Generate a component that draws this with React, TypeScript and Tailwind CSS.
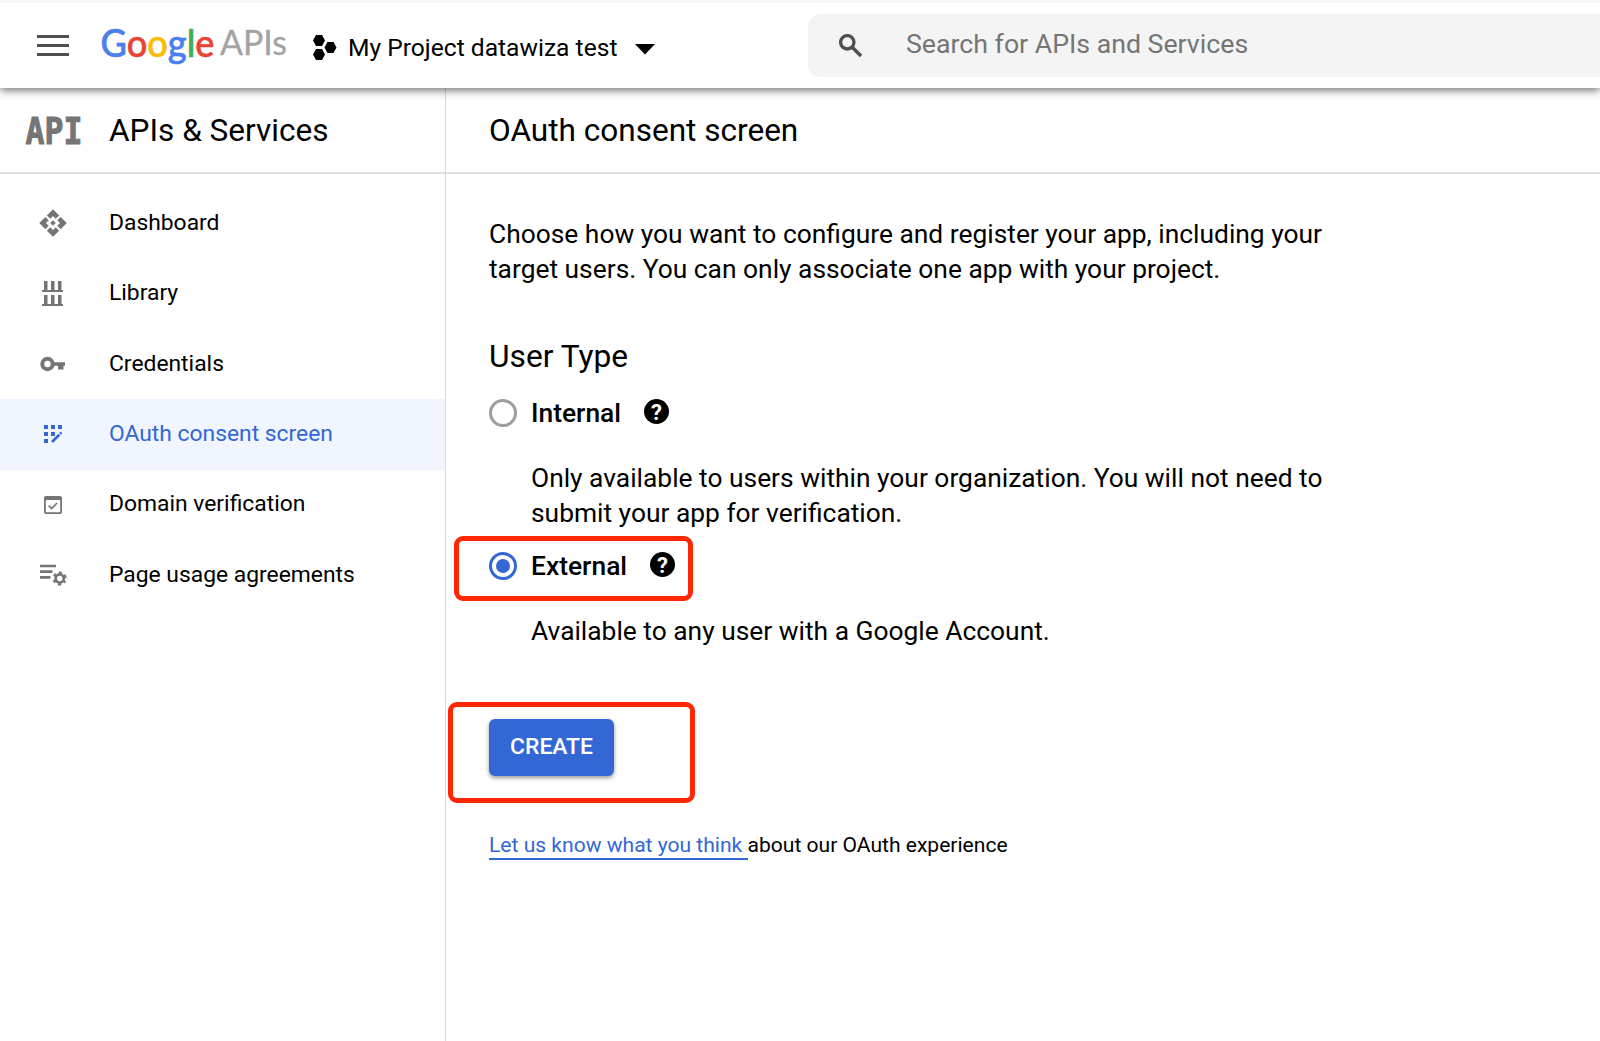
import { ReactNode } from "react";

function GoogleLogo() {
  return (
    <svg width="190" height="58" viewBox="0 0 190 58" className="shrink-0 overflow-visible">
      <text x="-0.5" y="40" fontFamily="Lato" fontSize="38" fontWeight="500" strokeWidth="0.6" textLength="114" lengthAdjust="spacingAndGlyphs">
        <tspan fill="#4a80ed" stroke="#4a80ed">G</tspan>
        <tspan fill="#ea4335" stroke="#ea4335">o</tspan>
        <tspan fill="#fbbc05" stroke="#fbbc05">o</tspan>
        <tspan fill="#4a80ed" stroke="#4a80ed">g</tspan>
        <tspan fill="#41ac59" stroke="#41ac59">l</tspan>
        <tspan fill="#ea4335" stroke="#ea4335">e</tspan>
      </text>
      <text x="119" y="38.300" fontFamily="Lato" fontSize="34" fill="#a3a3a3" stroke="#a3a3a3" strokeWidth="0.3" textLength="67" lengthAdjust="spacingAndGlyphs">
        APIs
      </text>
    </svg>
  );
}

function ApiLogo() {
  return (
    <svg width="60" height="50" viewBox="0 0 60 50" className="shrink-0 overflow-visible">
      <text x="1.500" y="38.500" fontFamily="DejaVu Sans Mono" fontSize="37" fontWeight="700" fill="#757575" stroke="#757575" strokeWidth="1" strokeLinejoin="round" textLength="57" lengthAdjust="spacingAndGlyphs">
        API
      </text>
    </svg>
  );
}

function SearchIcon() {
  return (
    <svg width="24" height="24" viewBox="0 0 24 24" fill="none" stroke="#4f4f4f">
      <circle cx="8.300" cy="8.300" r="6.700" strokeWidth="3.300" />
      <path d="M12.500 12.500L22 22" strokeWidth="3.600" />
    </svg>
  );
}

function DashboardIcon() {
  return (
    <svg width="30" height="30" viewBox="0 0 24 24" fill="currentColor">
      <path d="M12 1l4.900 4.900-2.700 2.700L12 6.400 9.800 8.600 7.100 5.900z" />
      <path d="M12 1l4.900 4.900-2.700 2.700L12 6.400 9.800 8.600 7.100 5.900z" transform="rotate(90 12 12)" />
      <path d="M12 1l4.900 4.900-2.700 2.700L12 6.400 9.800 8.600 7.100 5.900z" transform="rotate(180 12 12)" />
      <path d="M12 1l4.900 4.900-2.700 2.700L12 6.400 9.800 8.600 7.100 5.900z" transform="rotate(270 12 12)" />
      <path d="M12 9.800l2.200 2.200-2.200 2.200L9.800 12z" />
    </svg>
  );
}

function LibraryIcon() {
  return (
    <svg width="22" height="26" viewBox="0 0 22 26" fill="currentColor">
      <path d="M2 0h3.500v9H9V0h3.500v9H16V0h3.500v9H21v2H0V9h2zM2 14h3.500v9H9v-9h3.500v9H16v-9h3.500v9H21v2H0v-2h2z" />
    </svg>
  );
}

function KeyIcon() {
  return (
    <svg width="26" height="16" viewBox="0 0 26 16" fill="currentColor">
      <circle cx="7.500" cy="8" r="5.200" fill="none" stroke="currentColor" strokeWidth="4" />
      <path d="M13 6.200h12v3.600h-1.500v3.700H18V9.800h-5z" />
    </svg>
  );
}

function ConsentIcon() {
  return (
    <svg width="18" height="18" viewBox="0 0 18 18" fill="currentColor">
      <path d="M0 0h4v4H0zM7 0h4v4H7zM14 0h4v4h-4zM0 7h4v4H0zM7 7h4v4H7zM0 14h4v4H0z" />
      <path d="M8 17l7.300-7.300M16.100 8.900l1.400-1.400" fill="none" stroke="currentColor" strokeWidth="2.700" />
    </svg>
  );
}

function DomainIcon() {
  return (
    <svg width="18" height="18" viewBox="0 0 18 18" fill="none" stroke="currentColor">
      <rect x="0.900" y="0.900" width="16.200" height="16.200" rx="1" strokeWidth="1.800" />
      <path d="M1 2.500h16" strokeWidth="3" />
      <path d="M4.700 9.600l3 2.900 5.300-5.500" strokeWidth="1.700" />
    </svg>
  );
}

function AgreementsIcon() {
  return (
    <svg width="27" height="22" viewBox="0 0 27 22" fill="none" stroke="currentColor" className="ml-0.5">
      <path d="M0 2h16M0 7.700h12.500M0 13.300h10.500" strokeWidth="2.700" />
      <circle cx="19.700" cy="14.500" r="4.100" strokeWidth="2.700" />
      <circle cx="19.700" cy="14.500" r="6" strokeWidth="2.200" strokeDasharray="3.142 3.142" strokeDashoffset="1.571" transform="rotate(30 19.700 14.500)" />
    </svg>
  );
}

function NavItem({ icon, label, active }: { icon: ReactNode; label: string; active?: boolean }) {
  return (
    <a
      className={
        active
          ? "flex h-[70.4px] items-center bg-[#f0f5ff] text-[#3367d6]"
          : "flex h-[70.4px] items-center text-black"
      }
    >
      <span className={active ? "flex w-[105px] justify-center" : "flex w-[105px] justify-center text-[#757575]"}>
        {icon}
      </span>
      <span className="ml-1 text-[22.85px] leading-none">{label}</span>
    </a>
  );
}

function UserType({ label, checked }: { label: string; checked?: boolean }) {
  return (
    <div className="flex h-7 items-center">
      <span
        className={
          checked
            ? "flex size-7 items-center justify-center rounded-full border-[3.5px] border-[#3367d6]"
            : "size-7 rounded-full border-[3.5px] border-[#9e9e9e]"
        }
      >
        {checked && <span className="size-3.5 rounded-full bg-[#3367d6]" />}
      </span>
      <span className="ml-3.5 text-[26.4px] leading-7 font-medium">{label}</span>
      <span className="mb-[3px] ml-[23px] flex size-[25px] items-center justify-center rounded-full bg-black pt-0.5 text-[22px] leading-none font-bold text-white">
        ?
      </span>
    </div>
  );
}

export default function App() {
  return (
    <div className="flex h-[1041px] w-[1600px] flex-col overflow-hidden bg-white font-['Roboto',sans-serif] text-black">
      <header className="relative z-10 flex h-[88px] shrink-0 items-center border-t-[3px] border-[#f5f5f5] bg-white shadow-[0_2px_9px_rgba(0,0,0,0.6)]">
        <div className="ml-[37px] flex h-[21px] w-8 flex-col justify-between">
          <span className="h-[3px] bg-[#4f4f4f]" />
          <span className="h-[3px] bg-[#4f4f4f]" />
          <span className="h-[3px] bg-[#4f4f4f]" />
        </div>
        <div className="ml-8">
          <GoogleLogo />
        </div>
        <svg width="24" height="26" viewBox="0 0 24 26" className="mt-1 ml-[22px]">
          <path d="M3 0h6l3 5.500-3 5.500H3L0 5.500zM3 14h6l3 5.500L9 25H3l-3-5.500zM14.500 7h6l3 5.500-3 5.500h-6l-3-5.500z" />
        </svg>
        <span className="mt-1.5 ml-[11px] w-[270px] text-[24.6px] whitespace-nowrap">My Project datawiza test</span>
        <svg width="20" height="11" viewBox="0 0 20 11" className="mt-[7px] ml-[17px]">
          <path d="M0 0h20L10 10.500z" />
        </svg>
        <div className="ml-[153px] flex h-[63px] flex-1 items-center rounded-l-[13px] bg-[#f4f4f4]">
          <span className="ml-[31px]">
            <SearchIcon />
          </span>
          <span className="mb-0.5 ml-[43px] text-[26.7px] text-[#757575]">Search for APIs and Services</span>
        </div>
      </header>

      <div className="flex flex-1">
        <aside className="w-[446px] shrink-0 border-r border-[#dadada]">
          <div className="flex h-[86px] items-center border-b-2 border-[#e0e0e0] pl-6">
            <ApiLogo />
            <h1 className="ml-[25px] pt-px text-[31.55px]">APIs &amp; Services</h1>
          </div>
          <nav className="pt-3.5">
            <NavItem icon={<DashboardIcon />} label="Dashboard" />
            <NavItem icon={<LibraryIcon />} label="Library" />
            <NavItem icon={<KeyIcon />} label="Credentials" />
            <NavItem icon={<ConsentIcon />} label="OAuth consent screen" active />
            <NavItem icon={<DomainIcon />} label="Domain verification" />
            <NavItem icon={<AgreementsIcon />} label="Page usage agreements" />
          </nav>
        </aside>

        <main className="flex-1">
          <div className="flex h-[86px] items-center border-b-2 border-[#e0e0e0] pl-[43px]">
            <h2 className="pt-px text-[31.55px]">OAuth consent screen</h2>
          </div>
          <div className="pt-[43px] pl-[43px]">
            <p className="text-[26.36px] leading-[35.2px]">
              Choose how you want to configure and register your app, including your
              <br />
              target users. You can only associate one app with your project.
            </p>
            <h3 className="mt-[50px] mb-[22px] text-[31.7px] leading-10">User Type</h3>
            <UserType label="Internal" />
            <p className="mt-[34px] ml-[42px] text-[26.36px] leading-[35px]">
              Only available to users within your organization. You will not need to
              <br />
              submit your app for verification.
            </p>
            <div className="relative mt-[21px]">
              <div className="absolute -top-4 -left-[35px] h-[65px] w-[239px] rounded-[9px] border-[5px] border-[#ff2600]" />
              <UserType label="External" checked />
            </div>
            <p className="mt-[34px] ml-[42px] text-[26.36px] leading-[35.2px]">
              Available to any user with a Google Account.
            </p>
            <div className="relative mt-[69px]">
              <div className="absolute -top-[17px] -left-[41px] h-[101px] w-[247px] rounded-[9px] border-[5px] border-[#ff2600]" />
              <button className="flex h-[57px] w-[125px] items-center justify-center rounded-md bg-[#3367d6] text-[22.85px] font-medium text-white shadow-[0_2px_4px_rgba(0,0,0,0.4)]">
                CREATE
              </button>
            </div>
            <p className="mt-[55px] text-[21.07px] leading-7">
              <a className="inline-block border-b-2 border-[#3367d6] leading-[26px] whitespace-pre text-[#3367d6]">{"Let us know what you think "}</a>
              about our OAuth experience
            </p>
          </div>
        </main>
      </div>
    </div>
  );
}
